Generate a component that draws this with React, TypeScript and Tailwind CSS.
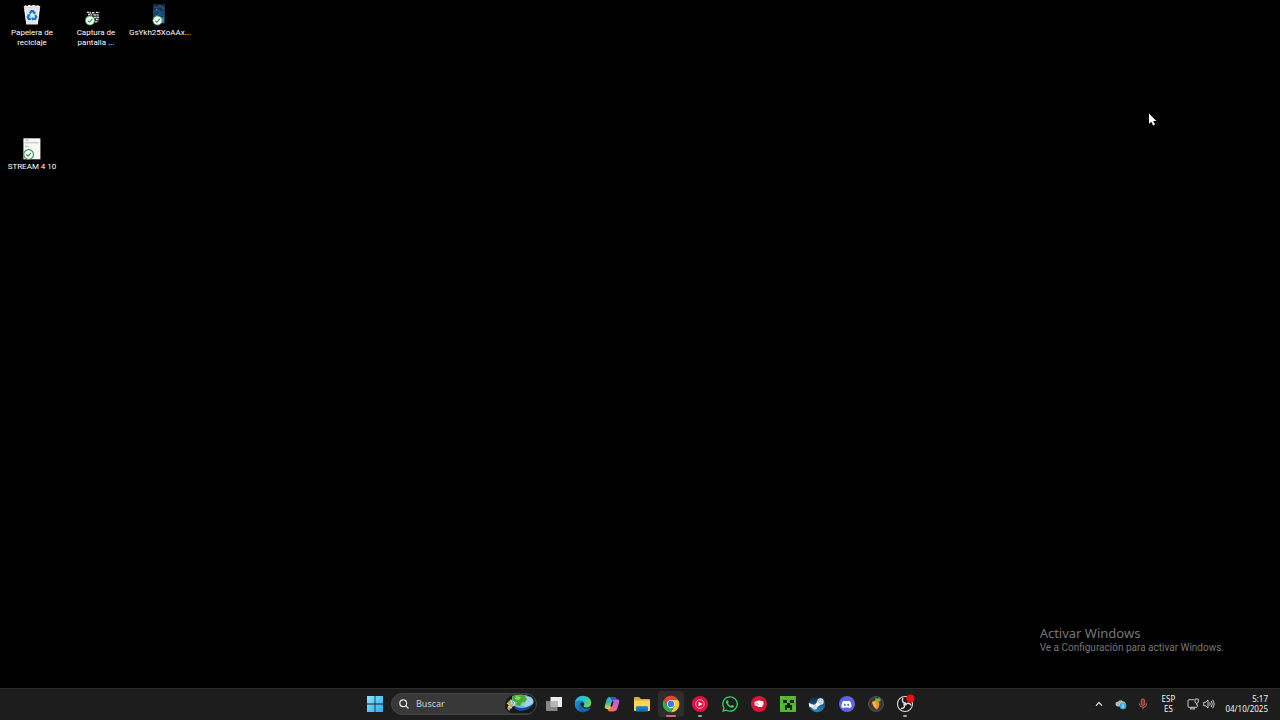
import type { ReactNode } from "react";
import { FaDiscord, FaWhatsapp } from "react-icons/fa";

function SyncBadge() {
  return (
    <g>
      <circle cx="5" cy="16.5" r="4.6" fill="#fff" stroke="#2f9e4f" strokeWidth="0.9" />
      <path d="m2.8 16.7 1.6 1.6 3-3.4" fill="none" stroke="#2f8f45" strokeWidth="1.1" />
    </g>
  );
}

function RecycleIcon() {
  return (
    <svg className="h-[22px] w-[22px]" viewBox="0 0 22 22">
      <path d="M2.8 2.5h16.4L16.8 20.4H5.2z" fill="#e4e7ea" />
      <path d="m2.8 2.5 1.4-1.2 2 .6L8 .8l2.4.9 2.2-.9 2.2 1 2-.6 2.4 1.3-1 1.4H3.9z" fill="#f8f8f8" />
      <path d="M2.8 2.5h16.4l-.3 2H3.1z" fill="#d9dcdf" />
      <path d="m4.2 6 1.7 14M17.8 6l-1.7 14" stroke="#fafafa" strokeWidth="0.8" />
      <g fill="none" stroke="#1778c8" strokeWidth="2.2">
        <path d="m8.8 9.6 1.5-2.4h1.8l1.3 2" />
        <path d="m14.2 11 1.1 2-1 1.8h-2.6" />
        <path d="M9.9 14.8H7.7l-1-1.8 1.1-2" />
      </g>
      <path d="m14.6 7.6-.3 3-2.7-1.2zM12 12.9v3.8l-2-1.9zM6 10.7l3-.7.5 2.9z" fill="#1778c8" />
    </svg>
  );
}

function CaptureIcon() {
  return (
    <svg className="h-[22px] w-[22px]" viewBox="0 0 22 22">
      <path d="M2.500 8h12v10h-10z" fill="#242424" />
      <path d="M2 8.400h4M7 8.600h3M11 8.400h3.500M3 10.500h4M8.500 11h5M9 13.400h5M11 15.500h3M10 17.800h3" stroke="#d5d5d5" strokeWidth="1.300" strokeDasharray="2.400 .7" />
      <path d="m7 9 3 3M13 10l-2 5M5 9l2 3" stroke="#8b8b8b" strokeWidth="0.9" />
      <SyncBadge />
    </svg>
  );
}

function PhotoIcon() {
  return (
    <svg className="h-[22px] w-[22px]" viewBox="0 0 22 22">
      <path d="M4 .5h12v19H4z" fill="#163f67" />
      <path d="M4 .5h12v5H4z" fill="#193149" />
      <path d="m5 3 3 1 3-2 4 3M5 8l4-2 2 3 4-1M6 12l4-2 5 2" fill="none" stroke="#245d8c" strokeWidth="1.1" />
      <path d="m10 14 5-1v6h-4z" fill="#397d9c" />
      <path d="m12 14 2 2M7 5l1 1" stroke="#c39675" strokeWidth="0.8" />
      <g transform="translate(3.500 0)"><SyncBadge /></g>
    </svg>
  );
}

function DocumentIcon() {
  return (
    <svg className="h-[22px] w-[22px]" viewBox="0 0 22 22">
      <path d="M2.4.3h17v21H2.4z" fill="#f7f8f8" />
      <path d="M4 2.2h4M3.5 4.8h14M4 8.6h4" stroke="#9b9fa2" strokeWidth="0.7" />
      <circle cx="7.6" cy="16.4" r="4.8" fill="#fff" stroke="#36944b" strokeWidth="1.1" />
      <path d="m5.3 16.5 1.7 1.7 3-3.4" fill="none" stroke="#36944b" strokeWidth="1.2" />
    </svg>
  );
}

function DesktopItem({ icon, children, place }: { icon: ReactNode; children: ReactNode; place: string }) {
  return (
    <button className={`flex w-16 flex-col items-center self-start pt-1 text-center font-['Roboto','Noto_Sans',sans-serif] text-[8px] leading-[10px] text-white ${place}`}>
      {icon}
      <span className="mt-[2px] whitespace-nowrap">{children}</span>
    </button>
  );
}

function StartIcon() {
  return (
    <svg className="h-4 w-4" viewBox="0 0 16 16">
      <defs>
        <linearGradient id="start" x1="0" y1="0" x2="1" y2="1">
          <stop stopColor="#8de3fb" />
          <stop offset="1" stopColor="#22aef0" />
        </linearGradient>
      </defs>
      <path d="M0 0h7.6v7.6H0zM8.4 0H16v7.6H8.4zM0 8.4h7.6V16H0zM8.4 8.4H16V16H8.4z" fill="url(#start)" />
    </svg>
  );
}

function EarthIcon() {
  return (
    <svg className="h-5 w-8" viewBox="0 0 32 20">
      <path d="M9 1h18q5 3 5 9t-6 9H8Q1 18 1 11t8-10z" fill="#141a1b" />
      <path d="M8 2q11-3 19 1 4 3 2 7-5 5-13 5-5-1-8-6z" fill="#6bb9e5" />
      <path d="M21 3q6-1 8 4-1 5-8 6l-3-2z" fill="#a5cfee" />
      <path d="m8 2 12-1 3 4-2 3-4 1-1 3-4-1 1-3-4-1z" fill="#45a936" />
      <path d="m12 2 5 1-2 3-4-1zM18 8l4 2-5 1z" fill="#9bd554" />
      <path d="M10 12q9 5 19-2-4 7-13 7-5-1-6-5z" fill="#1e469f" />
      <path d="m4 8 3-3 2 4 3 2-4 2-3 4-2-3 2-2z" fill="#afa780" />
      <path d="m4 12 4 2M7 6l1 4M3 9l3 2" stroke="#f1d66f" strokeWidth="1.3" />
      <path d="m9 7 2 2-2 3" fill="none" stroke="#f3f2dc" />
    </svg>
  );
}

function TaskViewIcon() {
  return (
    <svg className="h-[18px] w-[18px]" viewBox="0 0 18 18">
      <path d="M5.5 2H17v10H5.5z" fill="#ededed" />
      <path d="M1 6h11.5v10H1z" fill="#858585" />
      <path d="M5.5 6h7v6h-7z" fill="#b6b6b6" />
    </svg>
  );
}

function EdgeIcon() {
  return (
    <svg className="h-[18px] w-[18px]" viewBox="0 0 24 24">
      <defs>
        <linearGradient id="edge-top" x1="0" y1="0" x2="1" y2=".5">
          <stop stopColor="#28afe6" /><stop offset=".55" stopColor="#2bc3d2" /><stop offset="1" stopColor="#62d65b" />
        </linearGradient>
        <linearGradient id="edge-base" x1="0" y1="0" x2="1" y2="1">
          <stop stopColor="#1595df" /><stop offset="1" stopColor="#115ba9" />
        </linearGradient>
      </defs>
      <path d="M1 12C1 5 6 1 12 1c7 0 11 5 11 9.5 0 4-3 6-6.5 6-2.5 0-3.8-.7-3.8-1.6 0-.7 1-1.3 1-3 0-2.5-2.5-4.4-5.5-4.4C4.6 7.500 1 9.500 1 12z" fill="url(#edge-top)" />
      <path d="M1 12c0-2.500 3.600-4.500 7.200-4.500 2.800 0 5.200 1.800 5.500 4-.7-1-1.700-1.500-2.700-1.500-2 0-3.400 2-3.400 4.500 0 4.500 4 8.300 9 7.300-1.300.8-3 1.200-4.600 1.200C5.500 23 1 18 1 12z" fill="url(#edge-base)" />
      <path d="M8 12.500c-2 5 3.500 10.500 8.800 9.300 2-.8 3.700-2.300 4.800-4.200.2-.5 0-.8-.5-.6-6 2.700-11 .5-11.400-4.500z" fill="#1669b4" />
    </svg>
  );
}

function CopilotIcon() {
  return (
    <svg className="h-[18px] w-[18px]" viewBox="0 0 24 24">
      <defs>
        <linearGradient id="cp-left" x1="0" y1="0" x2=".2" y2="1">
          <stop stopColor="#29a7f3" /><stop offset=".5" stopColor="#31b6ae" /><stop offset="1" stopColor="#edcf35" />
        </linearGradient>
        <linearGradient id="cp-right" x1=".8" y1="0" x2="0" y2="1">
          <stop stopColor="#b05cf0" /><stop offset=".5" stopColor="#ec5caa" /><stop offset="1" stopColor="#ff7754" />
        </linearGradient>
      </defs>
      <path d="M15.500 2.500H9.200C6 2.500 5.200 5 4.300 8L2.500 14c-.8 2.600.2 4.500 2.500 4.500h3.200c2 0 2.700-1.400 3.200-3.200l2.500-8.300c.5-1.700 1.200-2.600 2.700-2.600z" fill="url(#cp-left)" />
      <path d="M8.500 21.500h6.300c3.200 0 4-2.500 4.900-5.500l1.800-6c.8-2.600-.2-4.500-2.500-4.500h-3.200c-2 0-2.700 1.400-3.200 3.200l-2.500 8.300c-.5 1.700-1.200 2.600-2.700 2.600z" fill="url(#cp-right)" />
      <path d="M9 2.500h6.300c1.600 0 2.200 1 2.700 3h-2.300c-1.700 0-2.500 1.200-3 3z" fill="#225dcf" />
      <path d="M15 21.500H8.700c-1.600 0-2.200-1-2.700-3h2.300c1.700 0 2.500-1.200 3-3z" fill="#f47548" />
      <path d="m13.300 8.500-2.600 7" stroke="#1d1d1d" strokeWidth="2.200" />
    </svg>
  );
}

function FolderIcon() {
  return (
    <svg className="h-[18px] w-[18px]" viewBox="0 0 18 18">
      <path d="M1 3q0-1 1-1h4l2 2h8q1 0 1 1v10H1z" fill="#e8a82e" />
      <path d="M1 5.500h16V15q0 1-1 1H2q-1 0-1-1z" fill="#fbd45c" />
      <path d="M3 16.500v-4q0-1.200 1.200-1.200h9.600q1.200 0 1.200 1.200v4z" fill="#197bc4" />
      <path d="M6 16.500v-2h6v2z" fill="#0f66ab" />
    </svg>
  );
}

function ChromeIcon() {
  return (
    <svg className="h-[18px] w-[18px]" viewBox="0 0 24 24">
      <path d="M2.470 6.500A11 11 0 0 1 21.530 6.500H12a5.500 5.500 0 0 0-4.760 8.250z" fill="#e94436" />
      <path d="M21.530 6.500A11 11 0 0 1 12 23l4.760-8.250A5.500 5.500 0 0 0 12 6.500z" fill="#fbcb20" />
      <path d="M12 23A11 11 0 0 1 2.470 6.500l4.770 8.250a5.500 5.500 0 0 0 9.520 0z" fill="#35a853" />
      <circle cx="12" cy="12" r="5.500" fill="#fff" />
      <circle cx="12" cy="12" r="4.300" fill="#367be7" />
    </svg>
  );
}

function MusicIcon() {
  return (
    <svg className="h-[18px] w-[18px]" viewBox="0 0 18 18">
      <circle cx="9" cy="9" r="8" fill="#e60c43" />
      <circle cx="9" cy="9" r="4.300" fill="none" stroke="#ffb5c5" strokeWidth="0.9" />
      <path d="m7.600 6.700 4 2.300-4 2.300z" fill="#fff" />
    </svg>
  );
}

function FistIcon() {
  return (
    <svg className="h-[18px] w-[18px]" viewBox="0 0 18 18">
      <circle cx="9" cy="9" r="8" fill="#dc1238" />
      <path d="m4.500 7 1.400-.8h1.300l.8-.6h2l.7.400 1.900.1.900.7-.1 3.200-1.100.8v1.300H8l-.8-1.200-2.500-.5z" fill="#fff" />
      <path d="M5 8.800h3l.6 1" fill="none" stroke="#dc1238" strokeWidth="0.500" />
    </svg>
  );
}

function CreeperIcon() {
  return (
    <svg className="h-4 w-4" viewBox="0 0 16 16">
      <path d="M0 0h16v16H0z" fill="#54b52f" />
      <path d="M0 0h4v3H0zM10 0h4v2h-4zM0 8h2v4H0zM13 10h3v4h-3z" fill="#5dbd36" />
      <path d="M3 4h4v3H3zM10 4h4v3h-4zM7 7h3v2H7zM5 9h7v5h-2v-2H7v2H5z" fill="#102109" />
    </svg>
  );
}

function SteamIcon() {
  return (
    <svg className="h-[18px] w-[18px]" viewBox="0 0 24 24">
      <defs>
        <linearGradient id="steam" x1="0" y1="0" x2="0" y2="1">
          <stop stopColor="#101d38" /><stop offset="1" stopColor="#218fc4" />
        </linearGradient>
      </defs>
      <circle cx="12" cy="12" r="11" fill="url(#steam)" />
      <path d="m1 10.500 6.300 2.600q1-.6 2.200-.5l2.800-4.100A4.300 4.300 0 1 1 16.600 13l-4 2.900A3.400 3.400 0 0 1 6 17.200l-4.400-1.800z" fill="#f7f9fb" />
      <circle cx="16.500" cy="8.600" r="2.400" fill="#e3eaf0" stroke="#657b93" strokeWidth="0.700" />
      <circle cx="9.200" cy="16" r="1.900" fill="none" stroke="#64a4c8" strokeWidth="0.700" />
    </svg>
  );
}

function DiscordIcon() {
  return (
    <span className="flex h-4 w-4 items-center justify-center rounded-full bg-[#5967df] text-white">
      <FaDiscord className="h-[11px] w-[11px]" />
    </span>
  );
}

function FruitIcon() {
  return (
    <svg className="h-[18px] w-[18px]" viewBox="0 0 18 18">
      <circle cx="9" cy="9" r="7.500" fill="#393b3b" stroke="#555857" strokeWidth="0.8" />
      <path d="M5 6.800 9 5.200l3.200 2.600q.4 4.300-2.400 6.900Q5.300 11.500 5 6.800z" fill="#f7941d" />
      <path d="m6 7.500 2-1 1 6.500q-2.600-2-3-5.500z" fill="#ffc34d" />
      <path d="M9 7q-2-2 0-4.500l1 1.700 2.500-2 .2 2.200 1.600.2q-1.300 3-5.300 2.400z" fill="#72bf35" />
    </svg>
  );
}

function ObsIcon() {
  return (
    <svg className="h-[18px] w-[18px] overflow-visible" viewBox="0 0 18 18">
      <circle cx="9" cy="9" r="7.500" fill="#18181a" stroke="#dedee0" strokeWidth="1.100" />
      <g fill="none" stroke="#d8d8dc" strokeWidth="1.500" strokeLinecap="round">
        <path d="M6.800 3.700c-1.300 2.400.2 4.300 2.500 4.300" />
        <path d="M6.800 3.700c-1.300 2.400.2 4.300 2.500 4.300" transform="rotate(120 9 9)" />
        <path d="M6.800 3.700c-1.300 2.400.2 4.300 2.500 4.300" transform="rotate(240 9 9)" />
      </g>
      <circle cx="9" cy="9" r="1.300" fill="#d8d8dc" />
      <circle cx="14.500" cy="3.500" r="4" fill="#eb0f12" />
    </svg>
  );
}

const apps: { name: string; icon: ReactNode; state?: "active" | "running" }[] = [
  { name: "Vista de tareas", icon: <TaskViewIcon /> },
  { name: "Edge", icon: <EdgeIcon /> },
  { name: "Copilot", icon: <CopilotIcon /> },
  { name: "Explorador de archivos", icon: <FolderIcon /> },
  { name: "Chrome", icon: <ChromeIcon />, state: "active" },
  { name: "Música", icon: <MusicIcon />, state: "running" },
  { name: "WhatsApp", icon: <FaWhatsapp className="h-[18px] w-[18px] text-[#32d366]" /> },
  { name: "Riot Client", icon: <FistIcon /> },
  { name: "Minecraft", icon: <CreeperIcon /> },
  { name: "Steam", icon: <SteamIcon /> },
  { name: "Discord", icon: <DiscordIcon /> },
  { name: "FL Studio", icon: <FruitIcon /> },
  { name: "OBS Studio", icon: <ObsIcon />, state: "running" },
];

function AppButton({ name, icon, state }: { name: string; icon: ReactNode; state?: "active" | "running" }) {
  return (
    <button aria-label={name} className="relative flex h-[30px] flex-1 items-center justify-center">
      <span className={`flex h-[26px] w-[26px] items-center justify-center rounded-sm ${state === "active" ? "bg-[#2d2d2d]" : ""}`}>{icon}</span>
      {state === "active" && <span className="absolute bottom-[2px] h-[2px] w-[10px] rounded-full bg-[#e4636c]" />}
      {state === "running" && <span className="absolute bottom-[2px] h-[2px] w-1 rounded-full bg-[#a0a0a0]" />}
    </button>
  );
}

function Tray() {
  return (
    <div className="flex h-[30px] items-center justify-end pr-3 text-[8px] leading-[10px] text-[#f2f2f2]">
      <button aria-label="Mostrar iconos ocultos" className="mr-[11px]">
        <svg className="h-[10px] w-[10px]" viewBox="0 0 10 10" fill="none" stroke="#e8e8e8" strokeWidth="1.200"><path d="m2 6.700 3-3 3 3" /></svg>
      </button>
      <button aria-label="OneDrive" className="mr-[10px]">
        <svg className="h-3 w-3" viewBox="0 0 12 12">
          <path d="M2.800 8.500a2.400 2.400 0 0 1 0-4.800Q5 .8 8 3.300q2.500.2 2.800 2.500V8.500z" fill="#b8b8b8" />
          <circle cx="8" cy="7.900" r="3.300" fill="#38ade2" />
          <path d="M8 5.800v.9M8 7.400v2.400" stroke="#fff" strokeWidth="1" />
        </svg>
      </button>
      <button aria-label="Micrófono" className="mr-3">
        <svg className="h-3 w-3" viewBox="0 0 12 12" fill="none" stroke="#cf625c" strokeWidth="0.900">
          <rect x="4.200" y="1" width="3.600" height="6.500" rx="1.800" fill="#75383a" />
          <path d="M2.300 5.300q0 4 3.700 4t3.700-4M6 9.300v2" />
        </svg>
      </button>
      <button className="mr-3 w-[14px] text-center"><span className="block">ESP</span><span className="block">ES</span></button>
      <button aria-label="Red y volumen" className="mr-[10px] flex gap-1">
        <svg className="h-3 w-3" viewBox="0 0 12 12" fill="none" stroke="#dadada" strokeWidth="0.900">
          <path d="M7 1.700H2Q1 1.700 1 2.700v5.600q0 1 1 1h7.500q.8 0 .8-1V6.500M4 9.300v1.600M7 9.300v1.600M3 10.900h5M8 1h3.300v3.300L9.700 5.500 8 4.300zM9.700 5.500v1.500" />
        </svg>
        <svg className="h-3 w-3" viewBox="0 0 12 12" fill="none" stroke="#dadada" strokeWidth="0.900">
          <path d="M.7 4.300h1.800L5 2v8L2.500 7.700H.7zM6.600 4.300q1.200 1.700 0 3.400M8.200 3q2.100 3 0 6M9.800 1.800q3 4.200 0 8.400" />
        </svg>
      </button>
      <button className="text-right"><time className="block">5:17</time><time className="block">04/10/2025</time></button>
    </div>
  );
}

export default function App() {
  return (
    <div className="flex min-h-screen flex-col bg-black font-['Noto_Sans','Open_Sans',sans-serif]">
      <main className="relative flex flex-1 flex-col justify-between">
        <div className="grid grid-cols-[64px_64px_64px] grid-rows-[134px_auto] justify-start">
          <DesktopItem place="col-start-1 row-start-1" icon={<RecycleIcon />}>Papelera de<br />reciclaje</DesktopItem>
          <DesktopItem place="col-start-2 row-start-1" icon={<CaptureIcon />}>Captura de<br />pantalla ...</DesktopItem>
          <DesktopItem place="col-start-3 row-start-1" icon={<PhotoIcon />}>GsYkh25XoAAx...</DesktopItem>
          <DesktopItem place="col-start-1 row-start-2" icon={<DocumentIcon />}>STREAM 4 10</DesktopItem>
        </div>
        <svg className="absolute top-[113px] left-[1148px] h-[14px] w-[10px]" viewBox="0 0 10 14">
          <path d="M1 .5v10.300l2.300-2 1.800 3.700 1.900-.9-1.800-3.500h3.100z" fill="#fff" />
        </svg>
        <div className="mr-14 mb-[33px] self-end text-[#767676]">
          <p className="text-[13px] leading-4">Activar Windows</p>
          <p className="font-['Roboto','Noto_Sans',sans-serif] text-[10px] leading-[14px]">Ve a Configuración para activar Windows.</p>
        </div>
      </main>
      <footer className="grid h-8 grid-cols-[1fr_auto_1fr] items-start border-t border-[#2c2c2c] bg-[#1d1d1d]">
        <div />
        <nav aria-label="Barra de tareas" className="flex items-center">
          <button aria-label="Inicio" className="flex h-[30px] w-8 items-center justify-center"><StartIcon /></button>
          <label className="flex h-[22px] w-[146px] items-center overflow-hidden rounded-full border border-[#434343] bg-[#383838] pl-[7px]">
            <svg className="h-[10px] w-[10px] shrink-0" viewBox="0 0 10 10" fill="none" stroke="#e3e3e3" strokeWidth="1.200"><circle cx="4.200" cy="4.200" r="3.400" /><path d="m6.700 6.700 2.800 2.800" /></svg>
            <input type="search" aria-label="Buscar" placeholder="Buscar" className="ml-[7px] min-w-0 flex-1 bg-transparent text-[9px] leading-[14px] text-white outline-none placeholder:text-[#d0d0d0]" />
            <EarthIcon />
          </label>
          <div className="mr-px ml-[2px] flex w-[381px]">
            {apps.map((app) => <AppButton key={app.name} {...app} />)}
          </div>
        </nav>
        <Tray />
      </footer>
    </div>
  );
}
